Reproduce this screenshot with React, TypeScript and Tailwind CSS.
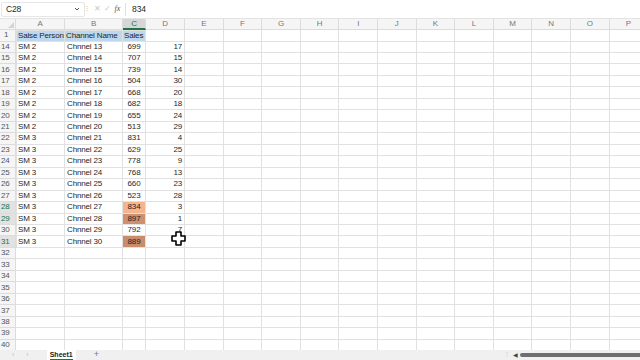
import React from "react";

const COLS = ["A", "B", "C", "D", "E", "F", "G", "H", "I", "J", "K", "L", "M", "N", "O", "P"];
const WIDTHS = ["w-[49px]", "w-[58px]", "w-[23px]", "w-[39px]"];

type Row = { n: number; a?: string; b?: string; c?: string; d?: string; fill?: string; sel?: boolean };

const data: [string, string, string, string][] = [
  ["SM 2", "Chnnel 13", "699", "17"],
  ["SM 2", "Chnnel 14", "707", "15"],
  ["SM 2", "Chnnel 15", "739", "14"],
  ["SM 2", "Chnnel 16", "504", "30"],
  ["SM 2", "Chnnel 17", "668", "20"],
  ["SM 2", "Chnnel 18", "682", "18"],
  ["SM 2", "Chnnel 19", "655", "24"],
  ["SM 2", "Chnnel 20", "513", "29"],
  ["SM 3", "Chnnel 21", "831", "4"],
  ["SM 3", "Chnnel 22", "629", "25"],
  ["SM 3", "Chnnel 23", "778", "9"],
  ["SM 3", "Chnnel 24", "768", "13"],
  ["SM 3", "Chnnel 25", "660", "23"],
  ["SM 3", "Chnnel 26", "523", "28"],
  ["SM 3", "Chnnel 27", "834", "3"],
  ["SM 3", "Chnnel 28", "897", "1"],
  ["SM 3", "Chnnel 29", "792", "7"],
  ["SM 3", "Chnnel 30", "889", ""],
];

// conditional formatting on Sales
const fills: Record<number, string> = { 28: "bg-[#f4b48e]", 29: "bg-[#cf9070]", 31: "bg-[#c98c6c]" };

const rows: Row[] = [
  ...data.map(([a, b, c, d], i) => {
    const n = 14 + i;
    return { n, a, b, c, d, fill: fills[n], sel: n === 28 || n === 29 || n === 31 };
  }),
  ...Array.from({ length: 9 }, (_, i) => ({ n: 32 + i })),
];

const Cell = ({ i, children, className = "" }: { i: number; children?: React.ReactNode; className?: string }) => (
  <div
    className={`${WIDTHS[i] ?? "w-[38.6px]"} shrink-0 h-full border-r border-b border-[#e1e1e1] flex items-center overflow-hidden whitespace-nowrap ${className}`}
  >
    {children}
  </div>
);

const tableCell = "border-[#3a3a3a] border-r border-b";

const App = () => {
  return (
    <div
      className="relative w-[640px] h-[360px] overflow-hidden bg-white text-[#1f1f1f] text-[8px] tracking-[-0.15px]"
      style={{ fontFamily: '"Liberation Sans", Arial, sans-serif' }}
    >
      {/* formula bar */}
      <div className="flex items-center h-[19px] border-b border-[#e3e3e3] bg-white">
        <div className="flex items-center justify-between w-[84px] h-[15px] ml-[1px] pl-[4px] pr-[4px] border border-[#e6e6e6] rounded-[2px]">
          <span className="text-[8.5px]">C28</span>
          <svg width="6" height="4" viewBox="0 0 6 4">
            <path d="M1 1l2 2 2-2" stroke="#555" fill="none" strokeWidth="1" />
          </svg>
        </div>
        <span className="ml-[1px] text-[#aaa] text-[7px]">⁝</span>
        <span className="ml-[6px] text-[#c8c8c8] text-[8px]">✕</span>
        <span className="ml-[3px] text-[#c8c8c8] text-[8px]">✓</span>
        <span className="ml-[4px] text-[#555] text-[8px] italic" style={{ fontFamily: '"Liberation Serif", serif' }}>
          fx
        </span>
        <div className="ml-[5px] h-[13px] w-px bg-[#e0e0e0]" />
        <span className="ml-[6px] text-[8.5px]">834</span>
      </div>

      {/* column headers */}
      <div className="flex h-[11px] bg-[#f5f5f5] text-[#777]">
        <div className="w-[16px] shrink-0 border-r border-b border-[#dcdcdc] flex items-end justify-end">
          <svg width="6" height="6" viewBox="0 0 6 6" className="mb-[1px] mr-[1px]">
            <path d="M6 0V6H0Z" fill="#d4d4d4" />
          </svg>
        </div>
        {COLS.map((c, i) => (
          <div
            key={c}
            className={`${WIDTHS[i] ?? "w-[38.6px]"} shrink-0 flex items-center justify-center border-r border-[#dcdcdc] ${
              c === "C" ? "bg-[#d6d6d6] border-b-2 border-b-[#217346] text-[#217346]" : "border-b"
            }`}
          >
            {c}
          </div>
        ))}
      </div>

      {/* row 1 */}
      <div className="flex h-[11.5px]">
        <div className="w-[16px] shrink-0 bg-[#f5f5f5] border-r border-b border-[#dcdcdc] flex items-center pl-[4px] text-[#555]">1</div>
        <Cell i={0} className={`bg-[#bdd7ee] pl-[1px] ${tableCell} border-t border-l`}>
          Salse Person
        </Cell>
        <Cell i={1} className={`bg-[#bdd7ee] pl-[1px] ${tableCell} border-t`}>
          Channel Name
        </Cell>
        <Cell i={2} className={`bg-[#bdd7ee] pl-[1px] ${tableCell} border-t`}>
          Sales
        </Cell>
        {COLS.slice(3).map((c, j) => (
          <Cell key={c} i={j + 3} />
        ))}
      </div>

      {rows.map((r) => {
        const inTable = r.n <= 31;
        return (
          <div key={r.n} className="flex h-[11.47px]">
            <div
              className={`w-[16px] shrink-0 border-r border-b border-[#dcdcdc] flex items-center pl-[1px] ${
                r.sel ? "bg-[#e2e2e2] text-[#217346]" : "bg-[#f5f5f5] text-[#555]"
              }`}
            >
              {r.n}
            </div>
            <Cell i={0} className={inTable ? `pl-[1px] ${tableCell} border-l` : ""}>
              {r.a}
            </Cell>
            <Cell i={1} className={inTable ? `pl-[2px] ${tableCell}` : ""}>
              {r.b}
            </Cell>
            <Cell i={2} className={inTable ? `justify-center ${tableCell} ${r.fill ?? ""}` : ""}>
              {r.c}
            </Cell>
            <Cell i={3} className="justify-end pr-[2px]">
              {r.d}
            </Cell>
            {COLS.slice(4).map((c, j) => (
              <Cell key={c} i={j + 4} />
            ))}
          </div>
        );
      })}

      {/* sheet tabs */}
      <div className="absolute left-0 right-0 bottom-0 h-[10px] bg-[#f0f0f0] flex items-center text-[7px] tracking-normal">
        <span className="ml-[12px] text-[#bbb]">‹</span>
        <span className="ml-[12px] text-[#bbb]">›</span>
        <div className="ml-[18px] h-full px-[3px] bg-white flex flex-col items-center justify-center">
          <span className="text-[#222] font-bold leading-none">Sheet1</span>
          <div className="w-full h-px bg-[#217346] mt-[1px]" />
        </div>
        <span className="ml-[18px] text-[#777] text-[9px]">+</span>
        <span className="ml-auto text-[#bbb]">⁝</span>
        <span className="ml-[5px] text-[#444] text-[6px]">◀</span>
        <div className="ml-[2px] w-[120px] h-[4px] bg-[#6e6e6e] rounded-l-[2px]" />
      </div>

      {/* cell cursor */}
      <svg className="absolute left-[171px] top-[231px]" width="15" height="15" viewBox="0 0 15 15">
        <path d="M5 1h5v4h4v5h-4v4H5v-4H1V5h4z" fill="#fff" stroke="#000" strokeWidth="1.6" strokeLinejoin="round" />
      </svg>
    </div>
  );
};

export default App;
